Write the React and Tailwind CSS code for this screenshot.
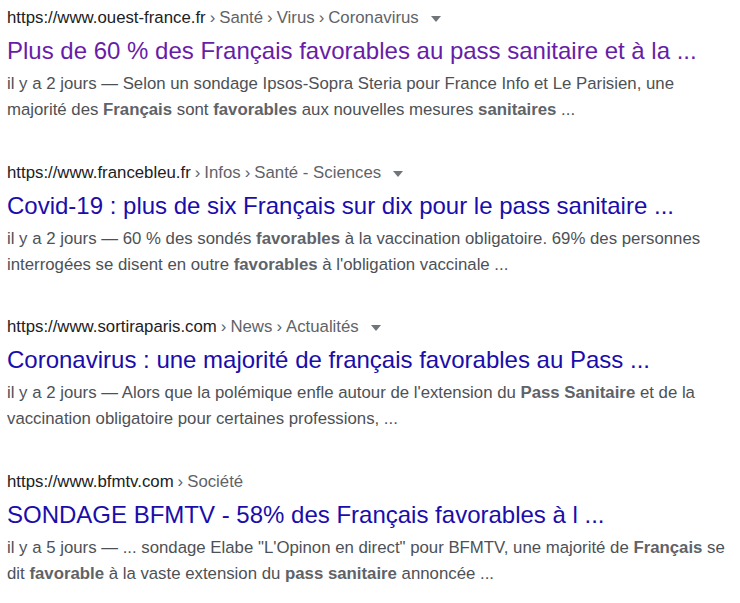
import React from 'react'

const results = [
  {
    site: 'https://www.ouest-france.fr',
    crumbs: ['Santé', 'Virus', 'Coronavirus'],
    menu: true,
    title: 'Plus de 60 % des Français favorables au pass sanitaire et à la ...',
    visited: true,
    snippet: [
      'il y a 2 jours — Selon un sondage Ipsos-Sopra Steria pour France Info et Le Parisien, une majorité des ',
      { b: 'Français' },
      ' sont ',
      { b: 'favorables' },
      ' aux nouvelles mesures ',
      { b: 'sanitaires' },
      ' ...',
    ],
  },
  {
    site: 'https://www.francebleu.fr',
    crumbs: ['Infos', 'Santé - Sciences'],
    menu: true,
    title: 'Covid-19 : plus de six Français sur dix pour le pass sanitaire ...',
    snippet: [
      'il y a 2 jours — 60 % des sondés ',
      { b: 'favorables' },
      ' à la vaccination obligatoire. 69% des personnes interrogées se disent en outre ',
      { b: 'favorables' },
      " à l'obligation vaccinale ...",
    ],
  },
  {
    site: 'https://www.sortiraparis.com',
    crumbs: ['News', 'Actualités'],
    menu: true,
    title: 'Coronavirus : une majorité de français favorables au Pass ...',
    snippet: [
      "il y a 2 jours — Alors que la polémique enfle autour de l'extension du ",
      { b: 'Pass Sanitaire' },
      ' et de la vaccination obligatoire pour certaines professions, ...',
    ],
  },
  {
    site: 'https://www.bfmtv.com',
    crumbs: ['Société'],
    menu: false,
    title: 'SONDAGE BFMTV - 58% des Français favorables à l ...',
    snippet: [
      'il y a 5 jours — ... sondage Elabe "L\'Opinon en direct" pour BFMTV, une majorité de ',
      { b: 'Français' },
      ' se dit ',
      { b: 'favorable' },
      ' à la vaste extension du ',
      { b: 'pass sanitaire' },
      ' annoncée ...',
    ],
  },
]

function Result({ r }) {
  return (
    <div className="w-[724px]">
      <div className="flex items-center h-[26px] text-[16.8px] leading-[26px] whitespace-nowrap">
        <span className="text-[#202124]">{r.site}</span>
        {r.crumbs.map(c => (
          <span key={c} className="text-[#5f6368]">
            <span className="mx-[4px]">›</span>
            {c}
          </span>
        ))}
        {r.menu && (
          <svg width="10" height="6" viewBox="0 0 10 6" className="ml-[12px] mt-[2px]">
            <path d="M0 0 L10 0 L5 6 Z" fill="#70757a" />
          </svg>
        )}
      </div>
      <div
        className={`mt-[4px] text-[24px] leading-[32px] whitespace-nowrap ${
          r.visited ? 'text-[#681da8]' : 'text-[#1a0dab]'
        }`}
      >
        {r.title}
      </div>
      <div className="mt-[4px] text-[16.8px] leading-[26px] text-[#4d5156]">
        {r.snippet.map((s, i) =>
          typeof s === 'string' ? (
            <span key={i}>{s}</span>
          ) : (
            <b key={i} className="font-bold text-[#5f6368]">{s.b}</b>
          )
        )}
      </div>
    </div>
  )
}

export default function App() {
  return (
    <div
      className="min-h-screen bg-white pl-[7px] pt-[5px] flex flex-col gap-[36.5px]"
      style={{ fontFamily: '"Liberation Sans", Arial, sans-serif' }}
    >
      {results.map(r => (
        <Result key={r.site} r={r} />
      ))}
    </div>
  )
}
